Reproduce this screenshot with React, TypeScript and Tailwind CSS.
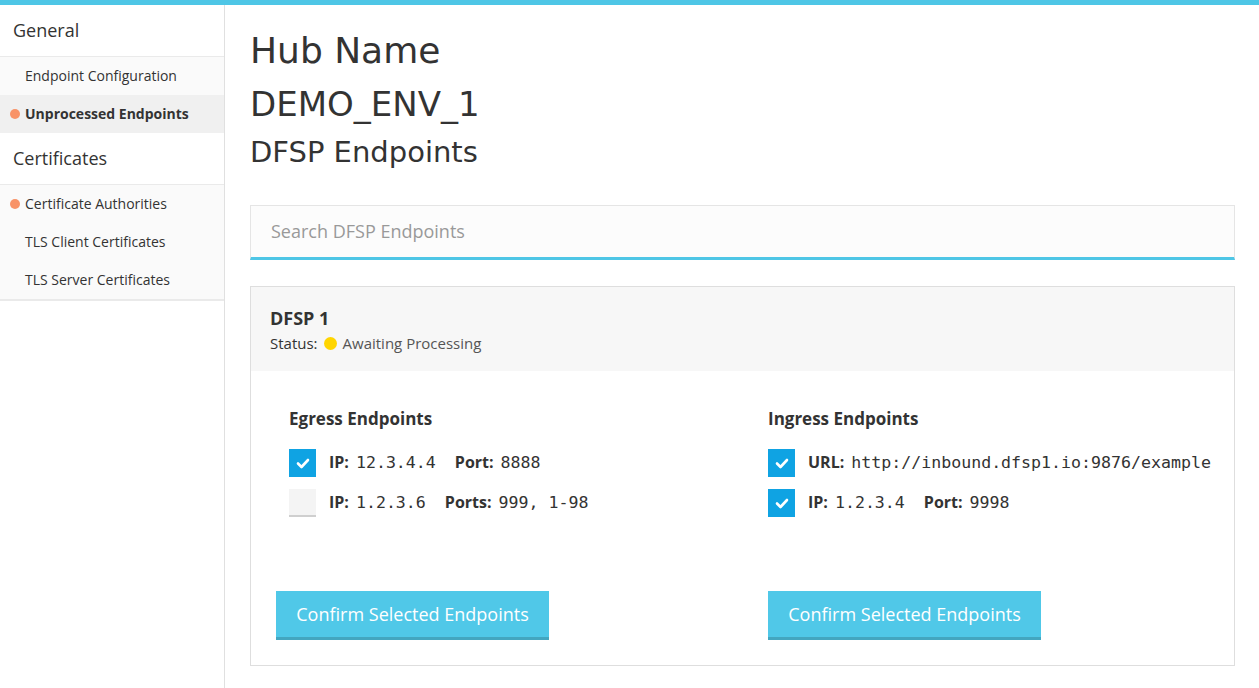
import React from "react";

const body = { fontFamily: '"Open Sans", "Noto Sans", sans-serif' };

function Check({ checked }: { checked: boolean }) {
  if (checked) {
    return (
      <div className="w-[27px] h-[28px] bg-[#0fa3e3] flex items-center justify-center shrink-0">
        <svg width="14" height="11" viewBox="0 0 14 11">
          <path d="M2 5.5 L5.5 9 L12 2" stroke="white" strokeWidth="2.6" fill="none" strokeLinecap="round" strokeLinejoin="round" />
        </svg>
      </div>
    );
  }
  return <div className="w-[27px] h-[28px] bg-[#f4f4f4] border-b-2 border-[#cfcfcf] shrink-0" />;
}

function Row({ checked, children }: { checked: boolean; children: React.ReactNode }) {
  return (
    <div className="flex items-center gap-[13px] h-[28px]">
      <Check checked={checked} />
      <div className="flex items-center text-[16px] text-[#333]">{children}</div>
    </div>
  );
}

const mono = { fontFamily: '"DejaVu Sans Mono", monospace' };

function Label({ k, v, gap }: { k: string; v: string; gap?: boolean }) {
  return (
    <span className={`flex items-baseline ${gap ? "ml-[19px]" : ""}`}>
      <b className="font-bold">{k}</b>
      <span className="ml-[7px] text-[16.6px] text-[#333]" style={mono}>
        {v}
      </span>
    </span>
  );
}

function SideItem({ text, dot, active }: { text: string; dot?: boolean; active?: boolean }) {
  return (
    <div className={`h-[38px] flex items-center relative pl-[25px] text-[14px] pb-[1px] ${active ? "bg-[#f0f0f0] font-bold text-[#333]" : "text-[#333]"}`}>
      {dot && <span className="absolute left-[10px] top-[14px] w-[10px] h-[10px] rounded-full bg-[#f89368]" />}
      {text}
    </div>
  );
}

const head = { fontFamily: '"DejaVu Sans", sans-serif' };

export default function App() {
  return (
    <div className="w-[1259px] h-[688px] bg-white overflow-hidden flex flex-col" style={body}>
      <div className="h-[5px] bg-[#4ec6e6] shrink-0" />
      <div className="flex flex-1 min-h-0">
        <aside className="w-[225px] shrink-0 border-r border-[#e0e0e0]">
          <div className="h-[52px] flex items-center pl-[13px] text-[18px] text-[#333] border-b border-[#eaeaea]">General</div>
          <div className="bg-[#fafafa]">
            <SideItem text="Endpoint Configuration" />
            <SideItem text="Unprocessed Endpoints" dot active />
          </div>
          <div className="h-[52px] flex items-center pl-[13px] text-[18px] text-[#333] border-b border-[#eaeaea] bg-white">Certificates</div>
          <div className="bg-[#fafafa] border-b-2 border-[#eaeaea]">
            <SideItem text="Certificate Authorities" dot />
            <SideItem text="TLS Client Certificates" />
            <SideItem text="TLS Server Certificates" />
          </div>
        </aside>
        <main className="flex-1 pl-[25px] pr-[24px]">
          <div className="text-[#333] pt-[24px]" style={head}>
            <div className="text-[36px] leading-[44px]">Hub Name</div>
            <div className="text-[34px] leading-[52px] mt-[5px]">DEMO_ENV_1</div>
            <div className="text-[29px] leading-[42px] mt-[1px]">DFSP Endpoints</div>
          </div>
          <div className="mt-[32px] h-[55px] bg-[#fcfcfc] border border-[#e5e5e5] border-b-[3px] border-b-[#4ec6e6] flex items-center pl-[20px] text-[18px] text-[#999]">
            Search DFSP Endpoints
          </div>
          <div className="mt-[26px] border border-[#dedede]">
            <div className="bg-[#f7f7f7] h-[84px] pl-[19px] pt-[19px]">
              <div className="text-[18px] font-bold text-[#333] leading-[24px]">DFSP 1</div>
              <div className="flex items-center text-[15px] text-[#333] mt-[2px]">
                Status:
                <span className="inline-block w-[13px] h-[13px] rounded-full bg-[#ffd500] ml-[6px] mr-[6px]" />
                <span className="text-[#555]">Awaiting Processing</span>
              </div>
            </div>
            <div className="grid grid-cols-2 pl-[25px] pr-[20px] pt-[36px] pb-[25px]">
              <div className="flex flex-col">
                <div className="pl-[13px] text-[17px] font-bold text-[#333] leading-[24px]">Egress Endpoints</div>
                <div className="pl-[13px] mt-[18px] flex flex-col gap-[12px]">
                  <Row checked>
                    <Label k="IP:" v="12.3.4.4" />
                    <Label k="Port:" v="8888" gap />
                  </Row>
                  <Row checked={false}>
                    <Label k="IP:" v="1.2.3.6" />
                    <Label k="Ports:" v="999, 1-98" gap />
                  </Row>
                </div>
                <button className="mt-[74px] w-[273px] h-[49px] bg-[#50c8e8] border-b-[3px] border-[#43a6c0] text-white text-[18px]">
                  Confirm Selected Endpoints
                </button>
              </div>
              <div className="flex flex-col pl-[23px]">
                <div className="text-[17px] font-bold text-[#333] leading-[24px]">Ingress Endpoints</div>
                <div className="mt-[18px] flex flex-col gap-[12px]">
                  <Row checked>
                    <Label k="URL:" v="http://inbound.dfsp1.io:9876/example" />
                  </Row>
                  <Row checked>
                    <Label k="IP:" v="1.2.3.4" />
                    <Label k="Port:" v="9998" gap />
                  </Row>
                </div>
                <button className="mt-[74px] w-[273px] h-[49px] bg-[#50c8e8] border-b-[3px] border-[#43a6c0] text-white text-[18px]">
                  Confirm Selected Endpoints
                </button>
              </div>
            </div>
          </div>
        </main>
      </div>
    </div>
  );
}
